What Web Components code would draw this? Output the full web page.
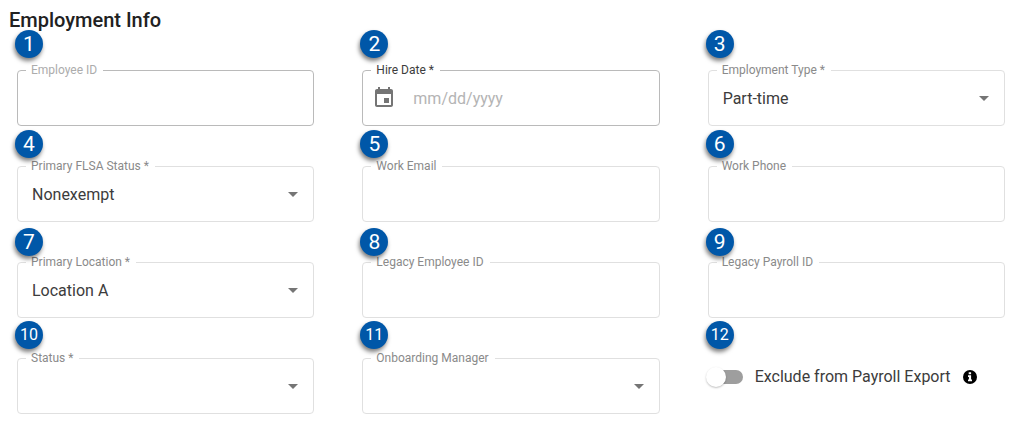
<!DOCTYPE html>
<html lang="en">
<head>
<meta charset="utf-8">
<meta name="viewport" content="width=device-width, initial-scale=1">
<title>Employment Info</title>
<style>
  body {
    margin: 0;
    background: #fff;
    color: #212121;
    font-family: Roboto, "Liberation Sans", sans-serif;
    font-size: 16px;
  }
</style>
</head>
<body>
<form-section>
  <span slot="title">Employment Info</span>
  <form-row style="--badge-rise: 40px">
    <text-field badge="1" tone="strong" disabled>Employee ID</text-field>
    <date-field badge="2" tone="strong" placeholder="mm/dd/yyyy">Hire Date *</date-field>
    <select-field badge="3" value="Part-time">Employment Type *</select-field>
  </form-row>
  <form-row style="--badge-rise: 36px">
    <select-field badge="4" value="Nonexempt">Primary FLSA Status *</select-field>
    <text-field badge="5" type="email">Work Email</text-field>
    <text-field badge="6" type="tel">Work Phone</text-field>
  </form-row>
  <form-row style="--badge-rise: 34px">
    <select-field badge="7" value="Location A">Primary Location *</select-field>
    <text-field badge="8">Legacy Employee ID</text-field>
    <text-field badge="9">Legacy Payroll ID</text-field>
  </form-row>
  <form-row style="--badge-rise: 37px">
    <select-field badge="10">Status *</select-field>
    <select-field badge="11">Onboarding Manager</select-field>
    <switch-field badge="12">Exclude from Payroll Export</switch-field>
  </form-row>
</form-section>

<script>
  class BaseElement extends HTMLElement {
    connectedCallback() {
      if (this.shadowRoot) return;
      this.attachShadow({ mode: "open" }).innerHTML = this.render();
    }
    attr(name) { return this.getAttribute(name) || ""; }
  }

  class FormSection extends BaseElement {
    render() {
      return `
        <style>
          :host { display: block; padding: 8px 23px 24px 17px; }
          h2 { margin: 0 0 38px -8px; font-size: 20px; line-height: 24px; font-weight: 500; }
          .rows { display: grid; gap: 40px; }
        </style>
        <h2><slot name="title"></slot></h2>
        <div class="rows"><slot></slot></div>`;
    }
  }

  class FormRow extends BaseElement {
    render() {
      return `
        <style>
          :host { display: grid; grid-template-columns: repeat(3, minmax(0, 1fr)); column-gap: 48px; align-items: start; }
        </style>
        <slot></slot>`;
    }
  }

  /* Numbered callout pinned over the top left corner of a field. */
  class StepBadge extends BaseElement {
    render() {
      return `
        <style>
          :host {
            position: absolute; z-index: 1; left: -2px; top: calc(-1 * var(--badge-rise, 36px));
            display: flex; align-items: center; justify-content: center;
            width: 28px; height: 28px; border-radius: 50%;
            background: #0057a8; color: #fff; font-size: 21px; line-height: 28px;
            box-shadow: -1px 3px 4px rgba(0, 0, 0, .5);
          }
          :host([wide]) { font-size: 16px; }
        </style>
        <slot></slot>`;
    }
  }

  class OutlinedField extends BaseElement {
    badge() {
      const n = this.attr("badge");
      return `<step-badge ${n.length > 1 ? "wide" : ""}>${n}</step-badge>`;
    }
    render() {
      return `
        <style>
          :host { display: block; position: relative; --line: #e0e0e0; --label: #8a8a8a; }
          :host([tone="strong"]) { --line: #bababa; --label: #3c3c3c; }
          :host([disabled]) { --label: #acacac; }
          fieldset {
            display: block; min-width: 0; margin: -6px 0 0; padding: 0 0 0 8px;
            border: 1px solid var(--line); border-radius: 4px;
          }
          legend { padding: 0 6px 0 5px; font-size: 12px; line-height: 13px; color: var(--label); }
          .control { display: grid; align-items: center; margin: -6px 0 0 -8px; height: 54px; }
          input, select {
            grid-area: 1 / 1; box-sizing: border-box; width: 100%; height: 100%; margin: 0; padding: 0 14px;
            border: 0; outline: 0; background: none; appearance: none;
            font: inherit; color: #3c3c3c; opacity: 1;
          }
          input::placeholder { color: #b4b4b4; opacity: 1; }
          svg { grid-area: 1 / 1; width: 24px; height: 24px; fill: #757575; pointer-events: none; }
          .arrow { justify-self: end; margin-right: 8px; }
          .calendar { margin-left: 9px; }
          .calendar + input { padding-left: 50px; }
        </style>
        ${this.badge()}
        <fieldset>
          <legend><label for="control"><slot></slot></label></legend>
          <div class="control">${this.control()}</div>
        </fieldset>`;
    }
  }

  class TextField extends OutlinedField {
    control() {
      return `<input id="control" type="${this.attr("type") || "text"}" ${this.hasAttribute("disabled") ? "disabled" : ""}>`;
    }
  }

  class DateField extends OutlinedField {
    control() {
      return `
        <svg class="calendar" viewBox="0 0 24 24" aria-hidden="true"><path d="M17 12h-5v5h5v-5zM16 1v2H8V1H6v2H5c-1.11 0-1.99.9-1.99 2L3 19c0 1.1.89 2 2 2h14c1.1 0 2-.9 2-2V5c0-1.1-.9-2-2-2h-1V1h-2zm3 18H5V8h14v11z"/></svg>
        <input id="control" type="text" placeholder="${this.attr("placeholder")}">`;
    }
  }

  class SelectField extends OutlinedField {
    control() {
      return `
        <select id="control"><option>${this.attr("value")}</option></select>
        <svg class="arrow" viewBox="0 0 24 24" aria-hidden="true"><path d="M7 10l5 5 5-5z"/></svg>`;
    }
  }

  class SwitchField extends OutlinedField {
    render() {
      return `
        <style>
          :host { display: flex; position: relative; align-items: center; height: 38px; color: #3c3c3c; }
          input {
            flex: none; position: relative; width: 34px; height: 14px; margin: 0 12px 0 1px;
            appearance: none; border-radius: 7px; background: #9e9e9e;
          }
          input::before {
            content: ""; position: absolute; left: -3px; top: -3px; width: 20px; height: 20px;
            border-radius: 50%; background: #fff;
            box-shadow: 0 1px 2px rgba(0, 0, 0, .25);
          }
          input:checked::before { left: 17px; }
          label { line-height: 20px; }
          svg { flex: none; width: 14px; height: 14px; margin-left: 12px; }
        </style>
        ${this.badge()}
        <input id="control" type="checkbox" role="switch">
        <label for="control"><slot></slot></label>
        <svg viewBox="0 0 14 14" aria-hidden="true">
          <circle cx="7" cy="7" r="7"/>
          <path fill="#fff" d="M5.7 2.2h2.4v2H5.7zM5 5.3h3.1v4.3H9v1.6H5V9.6h.9V6.9H5z"/>
        </svg>`;
    }
  }

  customElements.define("step-badge", StepBadge);
  customElements.define("text-field", TextField);
  customElements.define("date-field", DateField);
  customElements.define("select-field", SelectField);
  customElements.define("switch-field", SwitchField);
  customElements.define("form-row", FormRow);
  customElements.define("form-section", FormSection);
</script>
</body>
</html>
